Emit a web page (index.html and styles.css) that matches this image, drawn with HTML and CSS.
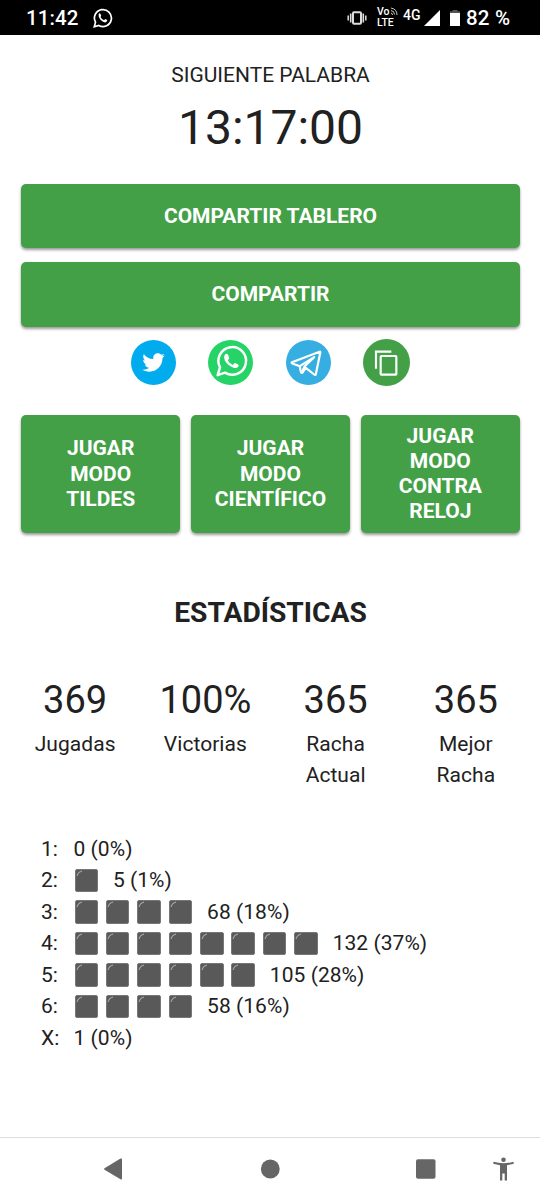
FILE: index.html
```html
<!DOCTYPE html>
<html lang="es">
<head>
<meta charset="utf-8">
<title>Estadísticas</title>
<link rel="stylesheet" href="styles.css">
</head>
<body>
<header class="status">
  <span class="clock">11:42</span>
  <svg class="status-wa" viewBox="0 0 20 20" fill="none" stroke="#fff" stroke-width="1.7"><path d="M1.3 18.7 2.5 14.2A8.5 8.5 0 1 1 5.8 17.5Z"/><path d="M5.6 6.2q1.1-1.7 2 0l.6 1.4q.1.4-.7 1.3 1.2 2.2 3.6 3.3l1.1-1.1 2.1 1q.2 1.6-1.6 2.2-2 .5-5-2.2-2.700-2.700-2.100-5.900Z" fill="#fff" stroke="none"/></svg>
  <svg class="vibrate" viewBox="0 0 20 16" fill="none" stroke="#ddd"><rect x="6" y="2.200" width="8" height="11.600" rx="1" stroke-width="2"/><path d="M3.700 3.500v9M16.300 3.500v9" stroke-width="1.600"/><path d="M1.200 5.500v5M18.800 5.500v5" stroke-width="1.500"/></svg>
  <div class="volte"><div class="vo">Vo<svg viewBox="0 0 8 9" fill="none" stroke="#ccc" stroke-width="1"><path d="M1 1q6 1 6 7M1 3.500q3.500.5 3.500 4M1 6q1.500.3 1.500 2"/></svg></div><div>LTE</div></div>
  <span class="net">4G</span>
  <svg class="signal" viewBox="0 0 16 16"><path d="M0 16 16 0V16Z" fill="#fff"/></svg>
  <svg class="battery" viewBox="0 0 10 16"><path d="M2.500 0h5v1.300H10V3H0V1.300h2.500Z" fill="#555"/><path d="M0 3h10v13H0Z" fill="#fff"/></svg>
  <span class="percent">82 %</span>
</header>
<main class="page">
  <div class="next">SIGUIENTE PALABRA</div>
  <div class="countdown">13:17:00</div>
  <div class="actions">
    <button class="btn wide">COMPARTIR TABLERO</button>
    <button class="btn wide">COMPARTIR</button>
  </div>
  <div class="share">
    <svg class="round" viewBox="0 0 64 64"><circle cx="32" cy="32" r="32" fill="#00aced"/><path fill="#fff" d="M48,22.1c-1.2,0.5-2.4,0.9-3.8,1c1.4-0.8,2.4-2.1,2.9-3.6c-1.3,0.8-2.7,1.3-4.2,1.6C41.7,19.8,40,19,38.2,19c-3.6,0-6.6,2.9-6.6,6.6c0,0.5,0.1,1,0.2,1.5c-5.5-0.3-10.3-2.9-13.5-6.900c-0.6,1-0.9,2.1-0.9,3.3c0,2.3,1.2,4.3,2.9,5.5c-1.1,0-2.1-0.3-3-0.8v0.100c0,3.2,2.3,5.8,5.3,6.400c-0.6,0.1-1.1,0.2-1.7,0.2c-0.4,0-0.8,0-1.2-0.1c0.8,2.6,3.3,4.5,6.1,4.600c-2.2,1.8-5.1,2.8-8.2,2.8c-0.5,0-1.1,0-1.6-0.1c2.9,1.9,6.4,2.9,10.1,2.9c12.1,0,18.7-10,18.7-18.7v-0.8C46,24.5,47.1,23.4,48,22.1z"/></svg>
    <svg class="round" viewBox="265 29 135 135"><circle cx="332.500" cy="96.500" r="67.500" fill="#25d366"/><path d="M294 134.500 301 111A41.500 41.500 0 1 1 316 127Z" fill="none" stroke="#fff" stroke-width="7.500" stroke-linejoin="round"/><path d="M315 74q5-7 10-1l4 10q0 3-5 7 5 9 15 14l6-6q3-1 11 5 3 2-1 7-5 5-14 2-17-6-26-22-4-9 0-16Z" fill="#fff"/></svg>
    <svg class="round" viewBox="49 29 134 134"><circle cx="116" cy="96" r="67" fill="#37aee2"/><g fill="none" stroke="#fff" stroke-width="6.500" stroke-linejoin="round" stroke-linecap="round"><path d="M67 95 149 64Q152 63 151 67L138 130Q137 135 132 131L108 112 99 125Q95 130 93 123L90 107 68 99Q64 97 67 95Z"/><path d="M90 107 133 80 104 108 97 125"/></g></svg>
    <svg class="round copy" viewBox="279 27 141 141"><circle cx="349.500" cy="97.500" r="70.500" fill="#43a047"/><g fill="none" stroke="#fff" stroke-width="6.500"><path d="M318 116V65H364"/><rect x="332" y="78" width="47" height="56" rx="2"/></g></svg>
  </div>
  <div class="modes">
    <button class="btn">JUGAR<br>MODO<br>TILDES</button>
    <button class="btn">JUGAR<br>MODO<br>CIENTÍFICO</button>
    <button class="btn">JUGAR<br>MODO<br>CONTRA<br>RELOJ</button>
  </div>
  <h1 class="title">ESTADÍSTICAS</h1>
  <div class="stats">
    <div><div class="value">369</div>Jugadas</div>
    <div><div class="value">100%</div>Victorias</div>
    <div><div class="value">365</div>Racha<br>Actual</div>
    <div><div class="value">365</div>Mejor<br>Racha</div>
  </div>
  <div class="dist">
    <div class="row"><span class="key">1:</span><span>0 (0%)</span></div>
    <div class="row"><span class="key">2:</span><i class="sq"></i><span class="count">5 (1%)</span></div>
    <div class="row"><span class="key">3:</span><i class="sq"></i><i class="sq"></i><i class="sq"></i><i class="sq"></i><span class="count">68 (18%)</span></div>
    <div class="row"><span class="key">4:</span><i class="sq"></i><i class="sq"></i><i class="sq"></i><i class="sq"></i><i class="sq"></i><i class="sq"></i><i class="sq"></i><i class="sq"></i><span class="count">132 (37%)</span></div>
    <div class="row"><span class="key">5:</span><i class="sq"></i><i class="sq"></i><i class="sq"></i><i class="sq"></i><i class="sq"></i><i class="sq"></i><span class="count">105 (28%)</span></div>
    <div class="row"><span class="key">6:</span><i class="sq"></i><i class="sq"></i><i class="sq"></i><i class="sq"></i><span class="count">58 (16%)</span></div>
    <div class="row"><span class="key">X:</span><span>1 (0%)</span></div>
  </div>
</main>
<nav class="nav">
  <svg viewBox="0 0 540 62" fill="#666"><path d="M104.500 30.300 120.500 20.500Q122 20 122 21.500V40.500Q122 42 120.500 41.300L104.500 31.700Q103.500 31 104.500 30.300Z"/><circle cx="270.300" cy="31" r="9.400"/><rect x="416" y="21.300" width="19.500" height="19.500" rx="2"/><circle cx="503.500" cy="21.700" r="2.300"/><path d="M493.500 23.800Q503.500 26.500 513.500 23.800L513.800 25.800 507 27.200V42.500H504.700V35.500H502.300V42.500H500V27.200L493.200 25.800Z"/></svg>
</nav>
</body>
</html>
```
FILE: styles.css
```css
* { box-sizing: border-box; }
body {
  margin: 0;
  height: 1200px;
  display: flex;
  flex-direction: column;
  background: #fff;
  color: #212121;
  font: 21px/31.5px Roboto, sans-serif;
  letter-spacing: 0.05px;
  overflow: hidden;
}
svg { display: block; flex: none; }
.status {
  height: 35px;
  flex: none;
  background: #000;
  color: #fff;
  display: flex;
  align-items: center;
  padding: 1px 0 0 26px;
  font-weight: 500;
  letter-spacing: 0;
}
.clock { width: 67px; font-size: 20.500px; letter-spacing: 0.1px; padding-top: 2px; }
.status-wa { width: 20px; height: 20px; }
.vibrate { width: 20px; height: 16px; margin-left: 234px; }
.volte { width: 22px; margin-left: 10px; font-size: 10.500px; line-height: 11px; margin-bottom: 2px; }
.vo { display: flex; align-items: center; }
.vo svg { width: 8px; height: 9px; }
.net { width: 21px; margin-left: 4px; font-size: 14px; line-height: 14px; margin-bottom: 7px; }
.signal { width: 16px; height: 16px; }
.battery { width: 10px; height: 16px; margin-left: 10px; }
.percent { margin-left: 6px; padding-top: 2px; font-size: 20.500px; letter-spacing: 0.2px; white-space: nowrap; }
.page { flex: 1; padding: 25px 20px 0 21px; }
.next { text-align: center; letter-spacing: 0; }
.countdown { font-size: 48px; line-height: 72px; text-align: center; letter-spacing: 0; }
.actions { display: flex; flex-direction: column; gap: 14px; margin-top: 20px; }
.btn {
  border: 0;
  border-radius: 5px;
  background: #43a047;
  color: #fff;
  font: 700 21px/25.200px Roboto, sans-serif;
  padding: 1px 0 0;
  box-shadow: 0 2px 3px rgba(0, 0, 0, 0.4);
}
.wide { height: 64.500px; }
.share { display: flex; justify-content: center; align-items: center; gap: 32.500px; margin-top: 12px; height: 48px; }
.round { width: 45px; height: 45px; }
.copy { width: 47px; height: 47px; }
.modes { display: grid; grid-template-columns: repeat(3, 1fr); gap: 10.500px; height: 117.500px; margin-top: 28.500px; }
.title { margin: 64px 0 0; font-size: 28.200px; line-height: 32px; text-align: center; letter-spacing: 0; }
.stats { display: grid; grid-template-columns: repeat(4, 1fr); margin: 44px -11px 0; text-align: center; height: 119px; }
.value { font-size: 38px; line-height: 54px; margin-bottom: 2px; letter-spacing: 0; }
.dist { margin: 42px 0 0 20px; }
.row { display: flex; align-items: center; height: 31.500px; white-space: nowrap; }
.key { width: 32.500px; }
.sq {
  width: 23.500px;
  height: 23.500px;
  margin: 0 6.900px 1px 1px;
  border: 1px solid #777;
  border-radius: 2px;
  background: radial-gradient(circle at 7px 7px, #595959 5px, #999 5.500px, #999 6.200px, #595959 7px) 0 0 / 6px 6px no-repeat #595959;
}
.count { margin-left: 8px; }
.nav { flex: none; height: 63px; border-top: 1px solid #ddd; }
.nav svg { width: 540px; height: 62px; }
```
